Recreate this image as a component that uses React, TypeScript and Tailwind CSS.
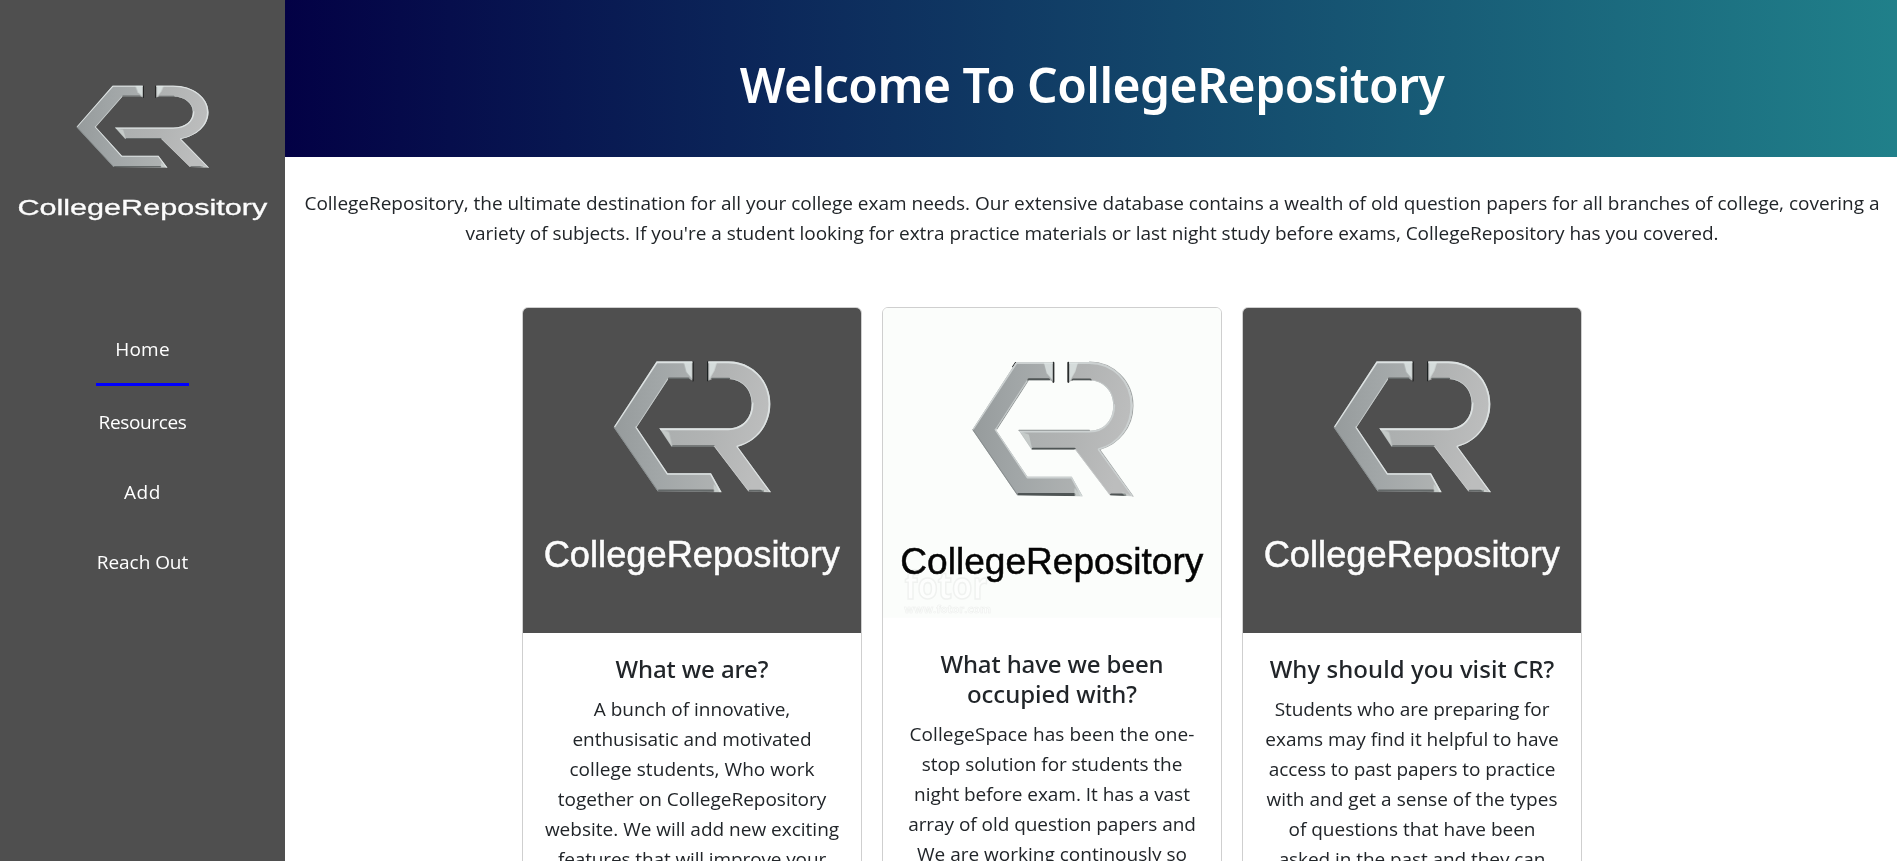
import React from "react";

type LineData = { text: string; tracking?: string };

type CardData = {
  dark: boolean;
  title: LineData[];
  body: LineData[];
};

const navItems = [
  { label: "Home", active: true, tracking: "tracking-[0.25px]" },
  { label: "Resources", active: false, tracking: "tracking-[-0.35px]" },
  { label: "Add", active: false, tracking: "tracking-[0.5px]" },
  { label: "Reach Out", active: false, tracking: "tracking-[-0.05px]" },
];

const intro: LineData[] = [
  {
    text: "CollegeRepository, the ultimate destination for all your college exam needs. Our extensive database contains a wealth of old question papers for all branches of college, covering a",
    tracking: "tracking-[-0.012px]",
  },
  {
    text: "variety of subjects. If you're a student looking for extra practice materials or last night study before exams, CollegeRepository has you covered.",
    tracking: "tracking-[-0.032px]",
  },
];

const cards: CardData[] = [
  {
    dark: true,
    title: [{ text: "What we are?", tracking: "tracking-[-0.1px]" }],
    body: [
      { text: "A bunch of innovative," },
      { text: "enthusisatic and motivated", tracking: "tracking-[-0.03px]" },
      { text: "college students, Who work", tracking: "tracking-[0.07px]" },
      { text: "together on CollegeRepository" },
      { text: "website. We will add new exciting" },
      { text: "features that will improve your", tracking: "tracking-[-0.12px]" },
      { text: "experience and help you learn" },
    ],
  },
  {
    dark: false,
    title: [
      { text: "What have we been", tracking: "tracking-[-0.12px]" },
      { text: "occupied with?", tracking: "tracking-[-0.02px]" },
    ],
    body: [
      { text: "CollegeSpace has been the one-", tracking: "tracking-[0.12px]" },
      { text: "stop solution for students the", tracking: "tracking-[-0.05px]" },
      { text: "night before exam. It has a vast", tracking: "tracking-[-0.035px]" },
      { text: "array of old question papers and", tracking: "tracking-[-0.05px]" },
      { text: "We are working continously so" },
      { text: "that you find all you need" },
    ],
  },
  {
    dark: true,
    title: [{ text: "Why should you visit CR?", tracking: "tracking-[0.07px]" }],
    body: [
      { text: "Students who are preparing for", tracking: "tracking-[-0.095px]" },
      { text: "exams may find it helpful to have" },
      { text: "access to past papers to practice", tracking: "tracking-[-0.05px]" },
      { text: "with and get a sense of the types", tracking: "tracking-[0.02px]" },
      { text: "of questions that have been" },
      { text: "asked in the past and they can", tracking: "tracking-[-0.07px]" },
      { text: "prepare for the next ones" },
    ],
  },
];

function Lines({ lines }: { lines: LineData[] }) {
  return (
    <>
      {lines.map((line) => (
        <span key={line.text} className={`block whitespace-nowrap ${line.tracking ?? ""}`}>
          {line.text}
        </span>
      ))}
    </>
  );
}

const C_SHAPE = "M155 34H262V92L254 87H190L95 232L188 370H318L350 427L158 424L26 232Z";
const R_SHAPE =
  "M310 34H370C440 34 496 90 496 162C496 225 455 275 398 290L498 427L430 424L328 290H200L163 235H370C415 235 440 203 440 160C440 118 410 88 370 87H322L310 92Z";

function Monogram({ id, dark }: { id: string; dark: boolean }) {
  return (
    <g strokeLinecap="round" strokeLinejoin="round">
      <defs>
        <linearGradient id={`${id}-c`} x1="0" y1="0" x2="1" y2="0">
          <stop offset="0" stopColor="#969b9c" />
          <stop offset="0.4" stopColor="#a1a6a7" />
          <stop offset="1" stopColor="#b0b3b3" />
        </linearGradient>
        <linearGradient id={`${id}-r`} x1="0" y1="0" x2="1" y2="0.25">
          <stop offset="0" stopColor="#a9adad" />
          <stop offset="0.55" stopColor="#b1b3b3" />
          <stop offset="1" stopColor="#bcbdbd" />
        </linearGradient>
        <filter id={`${id}-soft`} filterUnits="userSpaceOnUse" x="0" y="0" width="530" height="460">
          <feGaussianBlur stdDeviation="1.8" />
        </filter>
        <clipPath id={`${id}-clip`}>
          <path d={C_SHAPE} />
          <path d={R_SHAPE} />
        </clipPath>
      </defs>
      <g stroke={dark ? "#1d2020" : "#2a2d2d"} strokeWidth="4" fill="none" filter={`url(#${id}-soft)`}>
        <path d="M264 36V92M308 36V92" strokeWidth={dark ? 4 : 6} />
        {!dark && (
          <>
            <path d="M144 48L153 35H262" strokeWidth="3" />
            <path d="M190 88L98 230M163 234H370" stroke="#8b9090" strokeWidth="3" />
            <path d="M370 34C440 34 498 90 498 162C498 225 455 275 400 290L498 427" stroke="#a4a8a8" strokeWidth="3" />
          </>
        )}
      </g>
      <path d={C_SHAPE} fill={`url(#${id}-c)`} />
      <path d={R_SHAPE} fill={`url(#${id}-r)`} />
      <g clipPath={`url(#${id}-clip)`}>
        <g fill="none" filter={`url(#${id}-soft)`}>
          <path
            d="M26 232L155 36H262M95 232L188 371H318L348 427M163 237H370C415 237 442 203 442 160M310 36H370C440 36 494 90 494 162C494 225 455 275 398 290L498 427"
            stroke={dark ? "#dde2e2" : "#ccd1d1"}
            strokeWidth="7"
          />
          <path d="M190 86L95 232M370 88C410 88 440 118 440 160" stroke="#c5caca" strokeWidth="5" />
          <path
            d="M192 86H250M322 87H372M204 289H326M162 422H325M434 423H474"
            stroke={dark ? "#636767" : "#505454"}
            strokeWidth={dark ? 7 : 9}
          />
          <path d="M26 232L158 424" stroke="#878d8e" strokeWidth="5" />
          <path d="M328 290L430 424" stroke="#c8cbcb" strokeWidth="4" />
        </g>
        <g fill="#dfe7e5" opacity="0.8" filter={`url(#${id}-soft)`}>
          <path d="M236 36H262V88L244 66Z" />
          <path d="M312 36H336L328 62L312 90Z" />
          <path d="M163 235L192 246L202 290H198Z" opacity="0.6" />
          <path d="M326 402L350 427H326Z" opacity="0.6" />
          <path d="M464 414L498 427H474Z" opacity="0.6" />
        </g>
      </g>
    </g>
  );
}

function DarkLogo({ id, className }: { id: string; className: string }) {
  return (
    <svg viewBox="39 24 1014 975" preserveAspectRatio="none" className={className}>
      <rect x="39" y="24" width="1014" height="975" fill="#4f4f4f" />
      <g transform="translate(285 150)">
        <Monogram id={id} dark />
      </g>
      <text
        x="101"
        y="801"
        fontSize="109"
        textLength="889"
        lengthAdjust="spacingAndGlyphs"
        fill="#fcfcfc"
        stroke="#fcfcfc"
        strokeWidth="1.5"
        className="font-['Liberation_Sans',Arial,sans-serif]"
      >
        CollegeRepository
      </text>
    </svg>
  );
}

function LightLogo({ id, className }: { id: string; className: string }) {
  return (
    <svg viewBox="39 24 1014 960" preserveAspectRatio="none" className={className}>
      <rect x="39" y="24" width="1014" height="929" fill="#fbfdfb" />
      <g transform="translate(280.5 151.3) scale(1.0212 1.025)">
        <Monogram id={id} dark={false} />
      </g>
      <text
        x="104"
        y="898"
        fontSize="112"
        textLength="248"
        lengthAdjust="spacingAndGlyphs"
        fill="#fdfefd"
        stroke="#f0f2f0"
        strokeWidth="5"
        className="font-['Open_Sans',sans-serif] font-bold"
      >
        fotor
      </text>
      <text
        x="103"
        y="939"
        fontSize="33"
        textLength="260"
        lengthAdjust="spacingAndGlyphs"
        fill="#fdfefd"
        stroke="#eef0ee"
        strokeWidth="2"
        className="font-['Open_Sans',sans-serif] font-bold"
      >
        www.fotor.com
      </text>
      <text
        x="91"
        y="821"
        fontSize="112"
        textLength="909"
        lengthAdjust="spacingAndGlyphs"
        fill="#050505"
        stroke="#050505"
        strokeWidth="1.5"
        className="font-['Liberation_Sans',Arial,sans-serif]"
      >
        CollegeRepository
      </text>
    </svg>
  );
}

function Card({ card, id }: { card: CardData; id: string }) {
  return (
    <article className="w-[340px] shrink-0 overflow-hidden rounded-md border border-[#cfcfcf] bg-white">
      {card.dark ? (
        <DarkLogo id={id} className="block h-[325px] w-full" />
      ) : (
        <LightLogo id={id} className="block h-80 w-full" />
      )}
      <div className="flex flex-col items-center gap-2.5 pt-[21px] pb-5 text-center">
        <h2 className="font-['Noto_Sans',sans-serif] text-2xl leading-[30px] font-medium">
          <Lines lines={card.title} />
        </h2>
        <p className="text-[19px] leading-[30px]">
          <Lines lines={card.body} />
        </p>
      </div>
    </article>
  );
}

export default function App() {
  return (
    <div className="flex h-[861px] w-full overflow-hidden bg-white font-['Open_Sans',sans-serif] text-[#212529]">
      <aside className="flex w-[285px] shrink-0 flex-col bg-[#4f4f4f] pt-[52px]">
        <DarkLogo id="side" className="block h-[204px] w-[285px]" />
        <nav className="mt-[58px] flex flex-col items-center text-[19px] leading-[30px] text-white">
          {navItems.map((item) => (
            <a
              key={item.label}
              href="#"
              className={
                item.active
                  ? "mb-[1px] flex w-[93px] justify-center border-b-[3px] border-[#0000ff] pt-5 pb-[19px]"
                  : "flex justify-center py-5"
              }
            >
              <span className={item.tracking}>{item.label}</span>
            </a>
          ))}
        </nav>
      </aside>

      <main className="flex min-w-0 flex-1 flex-col">
        <header className="flex h-[157px] shrink-0 items-center justify-center bg-[linear-gradient(90deg,#030145,#20808a)] pt-3 pl-0.5">
          <h1 className="font-['Noto_Sans',sans-serif] text-[48px] leading-[60px] font-semibold tracking-[-0.5px] whitespace-nowrap text-white">
            Welcome To CollegeRepository
          </h1>
        </header>
        <p className="flex flex-col items-center pt-[31px] pl-0.5 text-[19px] leading-[30px]">
          <Lines lines={intro} />
        </p>
        <section className="mt-[59px] ml-[237px] flex items-start gap-5">
          {cards.map((card, i) => (
            <Card key={i} card={card} id={`card${i}`} />
          ))}
        </section>
      </main>
    </div>
  );
}
